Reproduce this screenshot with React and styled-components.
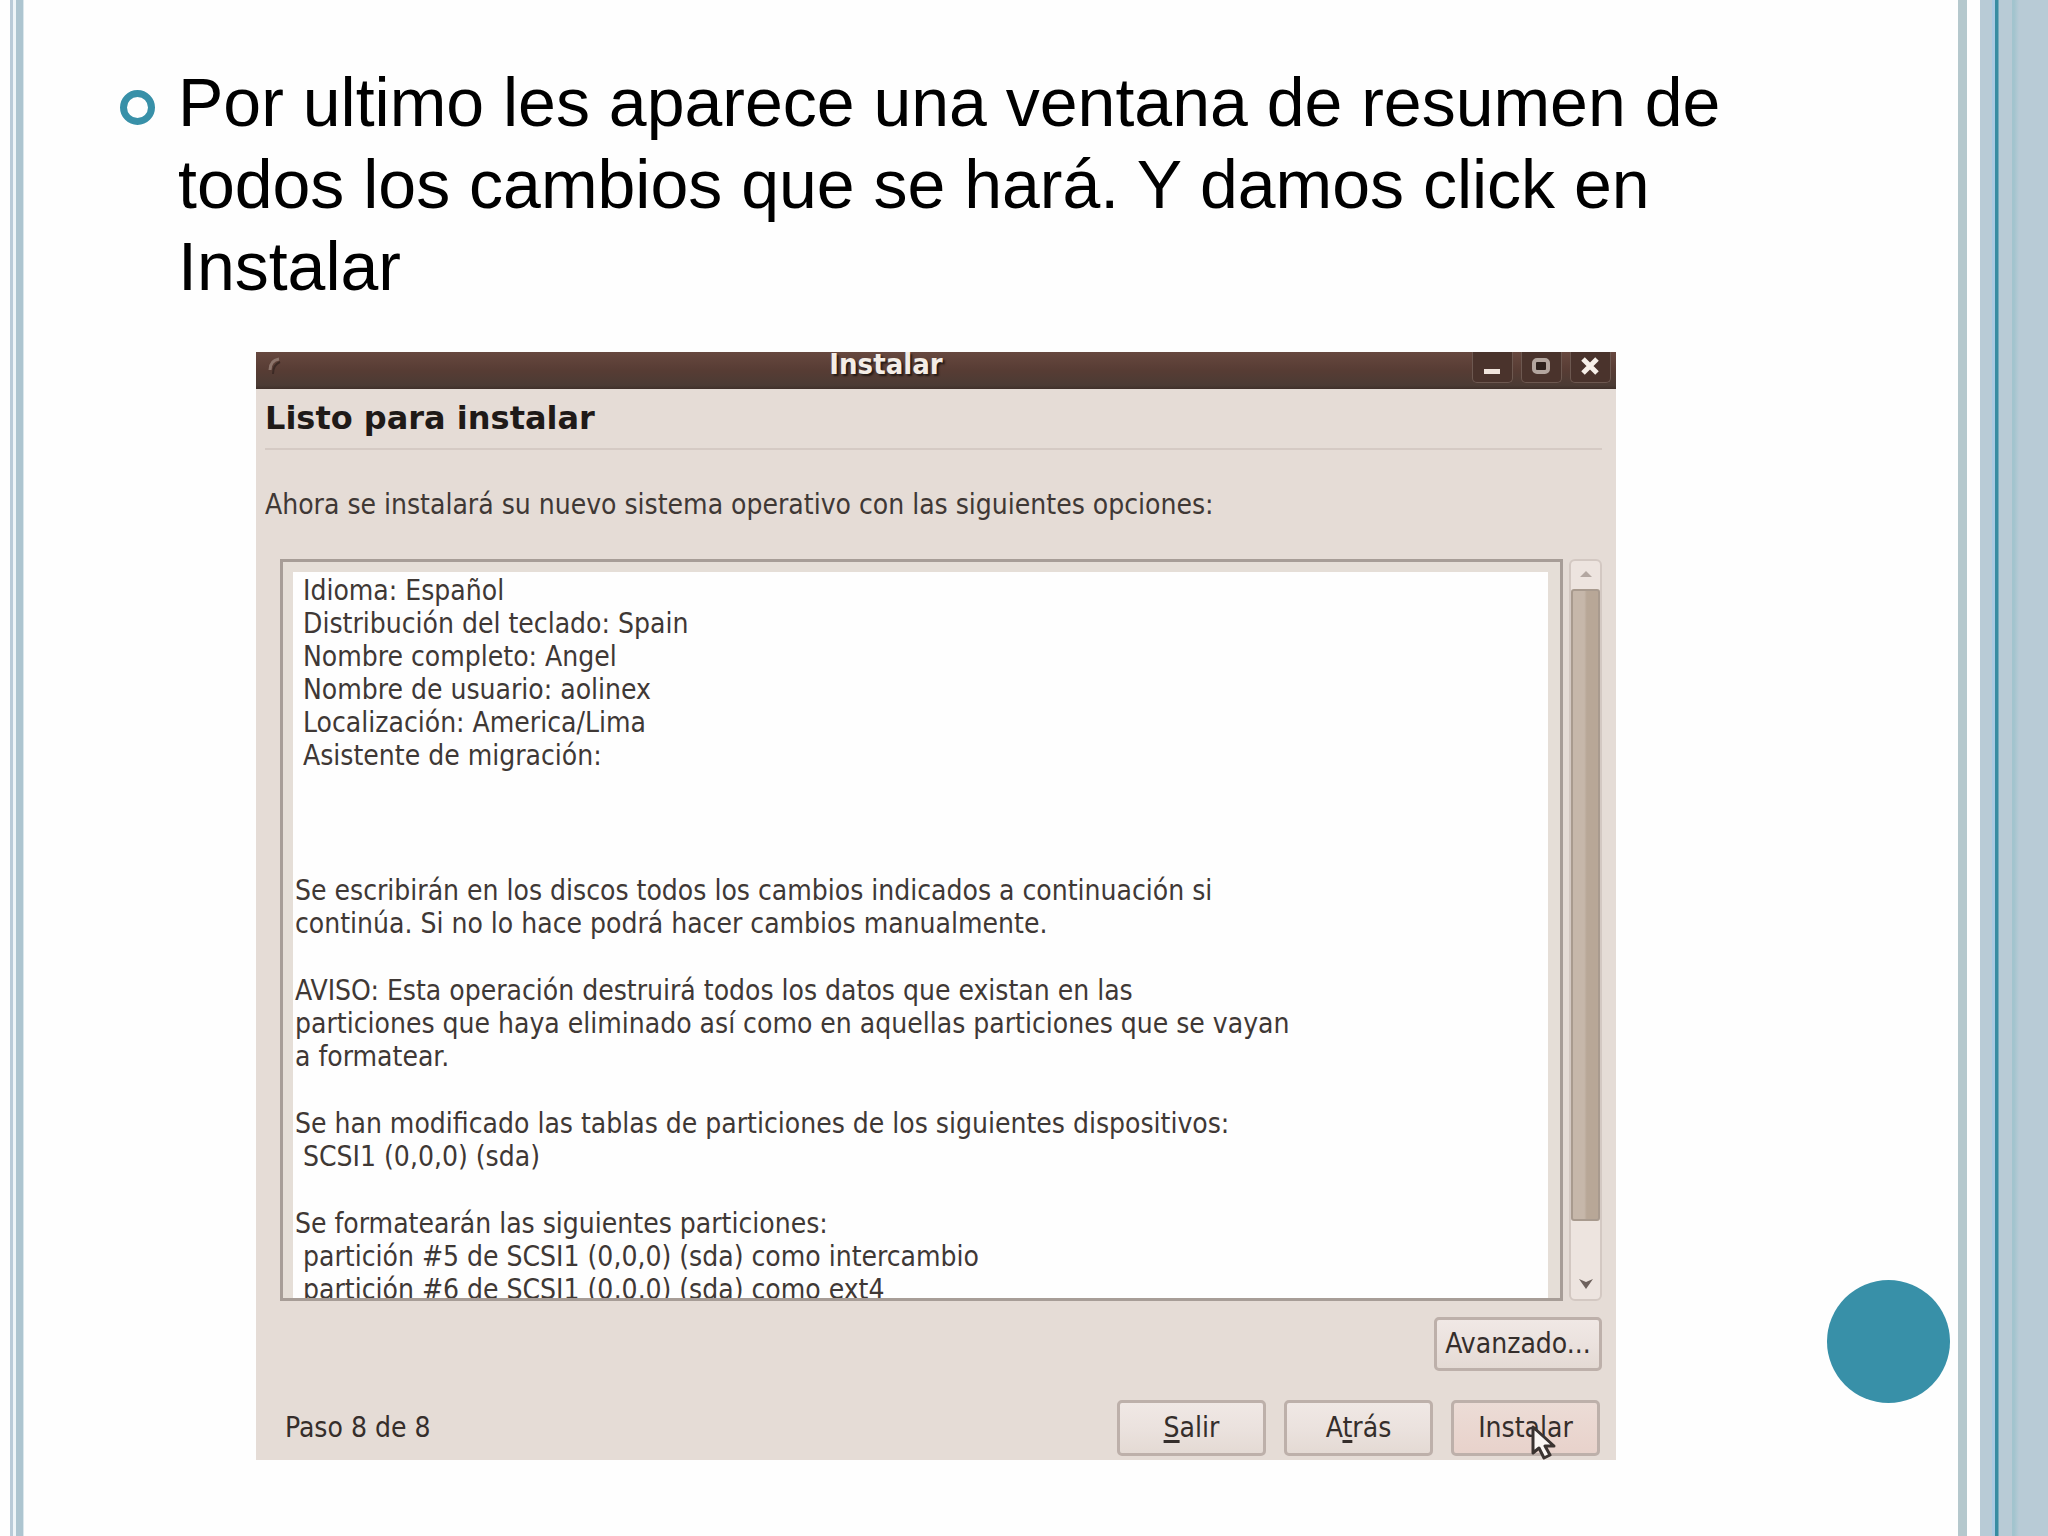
import React from "react";
import styled, { createGlobalStyle } from "styled-components";

const GlobalStyle = createGlobalStyle`
  *, *::before, *::after { box-sizing: border-box; }
  body { margin: 0; background: #fefefe; }
  h1, h2, p, ul { margin: 0; padding: 0; font-weight: inherit; }
`;

const uiFont = `"DejaVu Sans Condensed", "DejaVu Sans", sans-serif`;

const Slide = styled.div`
  position: relative;
  display: grid;
  grid-template-columns: 24px minmax(0, 1fr) 90px;
  min-height: 100vh;
  background: #fefefe;
`;

const LeftRail = styled.div`
  background: linear-gradient(
    to right,
    #fefefe 10px,
    #b9cbd8 10px 13px,
    #eef5f8 13px 16px,
    #adc5d0 16px 23px,
    #dbe7ec 23px
  );
`;

const RightRail = styled.div`
  background: linear-gradient(
    to right,
    #b5c8cd 9px,
    #fefefe 9px 22px,
    #b8cbd6 22px 34px,
    #a9cae2 34px 37px,
    #388ca1 37px 40px,
    #b8cbd6 41px 54px,
    #a2c4ce 54px 56px,
    #b8cbd6 61px
  );
`;

const Content = styled.main`
  padding: 61px 0 76px;
`;

const Bullets = styled.ul`
  list-style: none;
  padding: 0 200px 0 96px;
`;

const Bullet = styled.li`
  display: flex;
  align-items: flex-start;
  gap: 23px;
  font: 68px/82px "Liberation Sans", Arial, sans-serif;
  color: #000;

  &::before {
    content: "";
    flex: none;
    width: 35px;
    height: 35px;
    margin-top: 29px;
    border: 7px solid #3890a8;
    border-radius: 50%;
  }
`;

const Accent = styled.div`
  position: absolute;
  right: 98px;
  bottom: 133px;
  width: 123px;
  height: 123px;
  border-radius: 50%;
  background: #3890a8;
`;

const Dialog = styled.section`
  margin: 45px 342px 0 232px;
  background: #e5dcd6;
  font: 28px/33px ${uiFont};
  color: #3f3835;
`;

const TitleBar = styled.header`
  display: flex;
  height: 37px;
  overflow: hidden;
  background: linear-gradient(#67483f, #573c34 50%, #4b3b34 90%, #3f302a);
`;

const MenuMark = styled.svg`
  flex: none;
  width: 44px;
  height: 34px;
`;

const Title = styled.h1`
  flex: 1;
  text-align: center;
  font: bold 29px/25px ${uiFont};
  color: #f3ece6;
  text-shadow: 2px 2px 2px #241a16;
`;

const Controls = styled.div`
  display: flex;
  gap: 8px;
  padding-right: 5px;
`;

const Control = styled.button`
  width: 41px;
  height: 31px;
  padding: 0;
  border: 1px solid #6d5850;
  border-top: 0;
  border-radius: 0 0 5px 5px;
  background: #4a332c;

  svg { display: block; width: 39px; height: 30px; }
`;

const Heading = styled.h2`
  margin: 0 14px 0 9px;
  padding: 13px 0 13px;
  border-bottom: 2px solid #d5cac4;
  font: bold 32px/33px "DejaVu Sans", sans-serif;
  color: #1f1a18;
`;

const Intro = styled.p`
  padding: 38px 9px 0;
`;

const Viewer = styled.div`
  display: flex;
  gap: 6px;
  height: 742px;
  margin: 38px 14px 0 24px;
`;

const Summary = styled.div`
  display: flex;
  flex-direction: column;
  gap: 34px;
  flex: 1;
  min-width: 0;
  overflow: hidden;
  border: 3px solid #a79d97;
  padding: 12px 13px 0 10px;
  background: linear-gradient(#fefefe, #fefefe) no-repeat 10px 10px / calc(100% - 22px) 100% #e5ded7;
`;

const Paragraph = styled.p`
  flex: none;
  padding-left: 2px;
  padding-bottom: ${(p) => (p.$spaced ? 68 : 0)}px;
  white-space: pre;
`;

const ScrollBar = styled.div`
  display: flex;
  flex-direction: column;
  width: 33px;
  border: 2px solid #d3c8c2;
  border-radius: 6px;
  background: #ede4df;
`;

const ScrollArrow = styled.button`
  flex: none;
  height: 28px;
  padding: 0;
  border: 0;
  background: transparent;

  svg { display: block; width: 29px; height: 28px; }
`;

const Track = styled.div`
  flex: 1;
  padding-bottom: 50px;
`;

const Thumb = styled.div`
  height: 100%;
  border: 2px solid #a89a8e;
  border-radius: 3px;
  background: linear-gradient(to right, #c6b7aa 45%, #b8a797 55%);
`;

const Extra = styled.div`
  display: flex;
  justify-content: flex-end;
  padding: 16px 14px 0;
`;

const Footer = styled.footer`
  display: flex;
  align-items: center;
  gap: 18px;
  padding: 29px 16px 4px 29px;
`;

const Step = styled.span`
  flex: 1;
  padding-bottom: 2px;
  color: #352e2b;
`;

const Button = styled.button`
  position: relative;
  width: ${(p) => (p.$wide ? 168 : 149)}px;
  height: ${(p) => (p.$wide ? 54 : 56)}px;
  padding: 0 0 2px;
  border: 3px solid #bdb0aa;
  border-radius: 5px;
  background: ${(p) =>
    p.$hot
      ? "linear-gradient(#ecdcd6, #e8d2cb)"
      : "linear-gradient(#f0e8e5, #ebe2de 50%, #e4dad4)"};
  font: 28px/33px ${uiFont};
  color: #352e2b;
  white-space: nowrap;

  u { text-decoration-thickness: 3px; text-underline-offset: 3px; }
`;

const Pointer = styled.svg`
  position: absolute;
  left: 76px;
  top: 21px;
  width: 28px;
  height: 36px;
`;

const paragraphs = [
  [
    " Idioma: Español",
    " Distribución del teclado: Spain",
    " Nombre completo: Angel",
    " Nombre de usuario: aolinex",
    " Localización: America/Lima",
    " Asistente de migración:",
  ],
  [
    "Se escribirán en los discos todos los cambios indicados a continuación si",
    "continúa. Si no lo hace podrá hacer cambios manualmente.",
  ],
  [
    "AVISO: Esta operación destruirá todos los datos que existan en las",
    "particiones que haya eliminado así como en aquellas particiones que se vayan",
    "a formatear.",
  ],
  [
    "Se han modificado las tablas de particiones de los siguientes dispositivos:",
    " SCSI1 (0,0,0) (sda)",
  ],
  [
    "Se formatearán las siguientes particiones:",
    " partición #5 de SCSI1 (0,0,0) (sda) como intercambio",
    " partición #6 de SCSI1 (0,0,0) (sda) como ext4",
  ],
];

export default function App() {
  return (
    <>
      <GlobalStyle />
      <Slide>
        <LeftRail />
        <Content>
          <Bullets>
            <Bullet>
              Por ultimo les aparece una ventana de resumen de todos los cambios
              que se hará. Y damos click en Instalar
            </Bullet>
          </Bullets>

          <Dialog aria-label="Instalar">
            <TitleBar>
              <MenuMark viewBox="0 0 44 34" aria-hidden="true">
                <path d="M14 18c0-6 3-10 9-11" fill="none" stroke="#8c746b" strokeWidth="3" />
                <path d="M17 22c0-6 2-10 7-12" fill="none" stroke="#3c2a25" strokeWidth="2" />
              </MenuMark>
              <Title>Instalar</Title>
              <Controls>
                <Control aria-label="Minimizar">
                  <svg viewBox="0 0 39 30">
                    <rect x="11" y="17" width="16" height="5" fill="#f0e4dc" />
                  </svg>
                </Control>
                <Control aria-label="Maximizar">
                  <svg viewBox="0 0 39 30">
                    <rect x="12" y="8" width="14" height="12" rx="3" fill="#2e211d" stroke="#b3a59e" strokeWidth="4" />
                  </svg>
                </Control>
                <Control aria-label="Cerrar">
                  <svg viewBox="0 0 39 30">
                    <path d="M12 7l14 14M26 7L12 21" stroke="#f6efe8" strokeWidth="5" />
                  </svg>
                </Control>
              </Controls>
            </TitleBar>

            <Heading>Listo para instalar</Heading>
            <Intro>
              Ahora se instalará su nuevo sistema operativo con las siguientes opciones:
            </Intro>

            <Viewer>
              <Summary>
                {paragraphs.map((lines, i) => (
                  <Paragraph key={i} $spaced={i === 0}>
                    {lines.join("\n")}
                  </Paragraph>
                ))}
              </Summary>
              <ScrollBar>
                <ScrollArrow aria-label="Subir">
                  <svg viewBox="0 0 29 28">
                    <path d="M9 16l6-6 6 6z" fill="#b3a7a1" />
                  </svg>
                </ScrollArrow>
                <Track>
                  <Thumb />
                </Track>
                <ScrollArrow aria-label="Bajar">
                  <svg viewBox="0 0 29 28">
                    <path d="M8 8l7 3 7-3-7 10z" fill="#6e625d" />
                  </svg>
                </ScrollArrow>
              </ScrollBar>
            </Viewer>

            <Extra>
              <Button $wide>Avanzado...</Button>
            </Extra>

            <Footer>
              <Step>Paso 8 de 8</Step>
              <Button>
                <u>S</u>alir
              </Button>
              <Button>
                A<u>t</u>rás
              </Button>
              <Button $hot>
                Instalar
                <Pointer viewBox="0 0 28 36" aria-hidden="true">
                  <path
                    d="M3 3v26l6-5 5 10 6-3-5-9h9z"
                    fill="#fbf7f4"
                    stroke="#3a3330"
                    strokeWidth="3"
                    strokeLinejoin="round"
                  />
                </Pointer>
              </Button>
            </Footer>
          </Dialog>
        </Content>
        <RightRail />
        <Accent />
      </Slide>
    </>
  );
}
